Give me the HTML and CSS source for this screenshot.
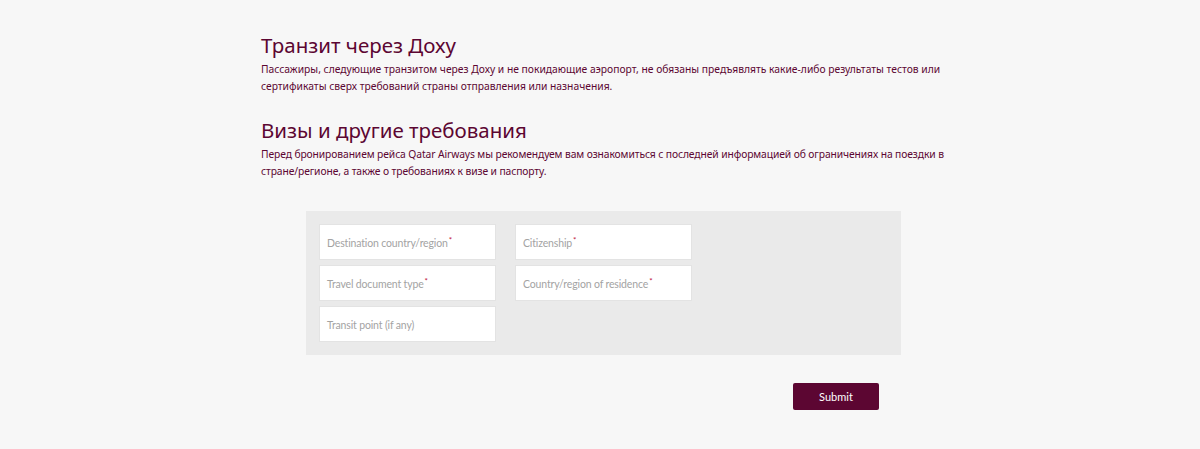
FILE: index.html
```html
<!DOCTYPE html>
<html lang="ru">
<head>
<meta charset="utf-8">
<title>Визы и другие требования</title>
<link rel="stylesheet" href="styles.css">
</head>
<body>
<main class="content">
  <section class="block">
    <h2 class="title">Транзит через Доху</h2>
    <p class="text">Пассажиры, следующие транзитом через Доху и не покидающие аэропорт, не обязаны предъявлять какие-либо результаты тестов или сертификаты сверх требований страны отправления или назначения.</p>
  </section>
  <section class="block block-second">
    <h2 class="title">Визы и другие требования</h2>
    <p class="text text-narrow">Перед бронированием рейса Qatar Airways мы рекомендуем вам ознакомиться с последней информацией об ограничениях на поездки в стране/регионе, а также о требованиях к визе и паспорту.</p>
  </section>
  <form class="panel">
    <div class="grid">
      <div class="field">Destination country/region<span class="req">*</span></div>
      <div class="field">Citizenship<span class="req">*</span></div>
      <div class="field">Travel document type<span class="req">*</span></div>
      <div class="field">Country/region of residence<span class="req">*</span></div>
      <div class="field">Transit point (if any)</div>
    </div>
  </form>
  <div class="actions">
    <button type="button" class="submit">Submit</button>
  </div>
</main>
</body>
</html>
```
FILE: styles.css
```css
html, body {
  margin: 0;
  padding: 0;
  background: #f7f7f7;
}
body {
  font-family: "Noto Sans", "DejaVu Sans", sans-serif;
  color: #5c0632;
}
.content {
  width: 700px;
  margin-left: 261px;
  padding-top: 31px;
}
.block {
  margin: 0;
}
.block-second {
  margin-top: 21px;
}
.title {
  margin: 0;
  font-weight: normal;
  font-size: 20.5px;
  line-height: 28px;
  color: #5c0632;
}
.text {
  margin: 2px 0 0;
  font-size: 10.3px;
  line-height: 17px;
  color: #5c0632;
}
.text-narrow {
  letter-spacing: -0.1px;
}
.panel {
  margin: 31px 60px 0 45px;
  background: #eaeaea;
  padding: 13px;
}
.grid {
  display: grid;
  grid-template-columns: 177px 177px;
  column-gap: 19px;
  row-gap: 5px;
}
.field {
  box-sizing: border-box;
  height: 36px;
  background: #fff;
  border: 1px solid #e3e3e3;
  padding: 1px 0 0 7px;
  display: flex;
  align-items: center;
  font-family: Lato, "Noto Sans", sans-serif;
  font-size: 10.5px;
  letter-spacing: -0.15px;
  color: #a3a3a3;
}
.req {
  color: #c0143c;
  font-size: 8px;
  align-self: flex-start;
  margin-top: 9px;
  margin-left: 1px;
}
.actions {
  display: flex;
  justify-content: flex-end;
  margin: 28px 82px 0 0;
}
.submit {
  width: 86px;
  height: 27px;
  background: #5c0632;
  color: #fff;
  border: none;
  border-radius: 2px;
  font-family: Lato, "Noto Sans", sans-serif;
  font-size: 11px;
  cursor: pointer;
}
```
